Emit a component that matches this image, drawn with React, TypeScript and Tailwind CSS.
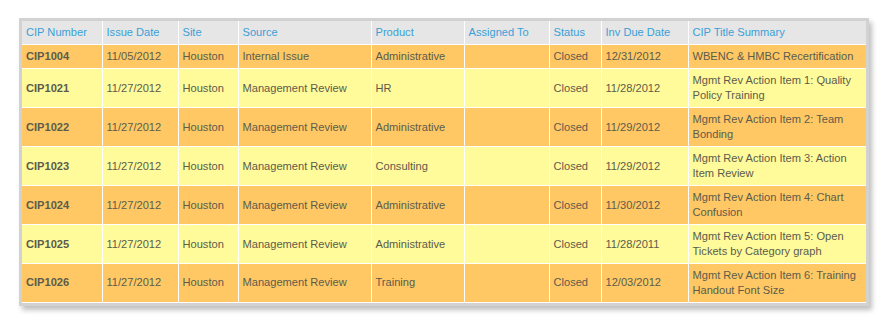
import React from "react";

type Row = {
  id: string;
  issue: string;
  site: string;
  source: string;
  product: string;
  assigned: string;
  status: string;
  due: string;
  title: string;
};

const rows: Row[] = [
  { id: "CIP1004", issue: "11/05/2012", site: "Houston", source: "Internal Issue", product: "Administrative", assigned: "", status: "Closed", due: "12/31/2012", title: "WBENC & HMBC Recertification" },
  { id: "CIP1021", issue: "11/27/2012", site: "Houston", source: "Management Review", product: "HR", assigned: "", status: "Closed", due: "11/28/2012", title: "Mgmt Rev Action Item 1: Quality Policy Training" },
  { id: "CIP1022", issue: "11/27/2012", site: "Houston", source: "Management Review", product: "Administrative", assigned: "", status: "Closed", due: "11/29/2012", title: "Mgmt Rev Action Item 2: Team Bonding" },
  { id: "CIP1023", issue: "11/27/2012", site: "Houston", source: "Management Review", product: "Consulting", assigned: "", status: "Closed", due: "11/29/2012", title: "Mgmt Rev Action Item 3: Action Item Review" },
  { id: "CIP1024", issue: "11/27/2012", site: "Houston", source: "Management Review", product: "Administrative", assigned: "", status: "Closed", due: "11/30/2012", title: "Mgmt Rev Action Item 4: Chart Confusion" },
  { id: "CIP1025", issue: "11/27/2012", site: "Houston", source: "Management Review", product: "Administrative", assigned: "", status: "Closed", due: "11/28/2011", title: "Mgmt Rev Action Item 5: Open Tickets by Category graph" },
  { id: "CIP1026", issue: "11/27/2012", site: "Houston", source: "Management Review", product: "Training", assigned: "", status: "Closed", due: "12/03/2012", title: "Mgmt Rev Action Item 6: Training Handout Font Size" },
];

const headers = [
  "CIP Number",
  "Issue Date",
  "Site",
  "Source",
  "Product",
  "Assigned To",
  "Status",
  "Inv Due Date",
  "CIP Title Summary",
];

const widths = ["w-[80px]", "w-[76px]", "w-[60px]", "w-[133px]", "w-[93px]", "w-[85px]", "w-[52px]", "w-[87px]", "w-[178px]"];

const cell = "border border-white px-[4px] py-[4px] align-middle text-[#5c5c4c]";

export default function App() {
  return (
    <div
      className="w-[896px] h-[324px] bg-white pt-[18px] pl-[19px]"
      style={{ fontFamily: "'Liberation Sans', Arial, sans-serif" }}
    >
      <div className="w-[850px] border-[3px] border-[#d2d2d2] shadow-[3px_4px_5px_rgba(0,0,0,0.25)]">
        <table className="table-fixed w-[844px] border-collapse text-[11.1px] leading-[15px]">
          <colgroup>
            {widths.map((w, i) => (
              <col key={i} className={w} />
            ))}
          </colgroup>
          <thead>
            <tr className="bg-[#e6e6e6]">
              {headers.map((h) => (
                <th
                  key={h}
                  className="border border-white border-t-0 text-left font-normal text-[#3aa0d8] px-[4px] py-[4px] first:border-l-0 last:border-r-0 whitespace-nowrap"
                >
                  {h}
                </th>
              ))}
            </tr>
          </thead>
          <tbody>
            {rows.map((r, i) => (
              <tr key={r.id} className={i % 2 === 0 ? "bg-[#ffc864]" : "bg-[#fffa9a]"}>
                <td className={`${cell} border-l-0 font-bold text-[#4a4a3a]`}>{r.id}</td>
                <td className={cell}>{r.issue}</td>
                <td className={cell}>{r.site}</td>
                <td className={cell}>{r.source}</td>
                <td className={cell}>{r.product}</td>
                <td className={cell}>{r.assigned}</td>
                <td className={cell}>{r.status}</td>
                <td className={cell}>{r.due}</td>
                <td className={`${cell} border-r-0 ${i === rows.length - 1 ? "border-b-0" : ""}`}>{r.title}</td>
              </tr>
            ))}
          </tbody>
        </table>
      </div>
    </div>
  );
}
